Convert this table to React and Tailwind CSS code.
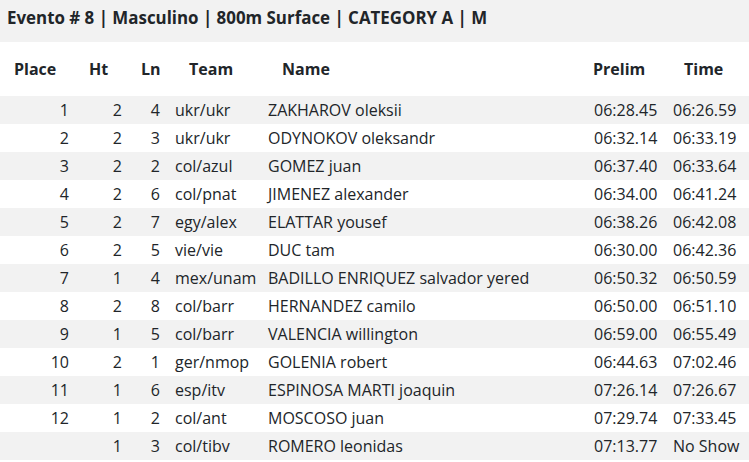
import React from "react";

const rows = [
  ["1", "2", "4", "ukr/ukr", "ZAKHAROV oleksii", "06:28.45", "06:26.59"],
  ["2", "2", "3", "ukr/ukr", "ODYNOKOV oleksandr", "06:32.14", "06:33.19"],
  ["3", "2", "2", "col/azul", "GOMEZ juan", "06:37.40", "06:33.64"],
  ["4", "2", "6", "col/pnat", "JIMENEZ alexander", "06:34.00", "06:41.24"],
  ["5", "2", "7", "egy/alex", "ELATTAR yousef", "06:38.26", "06:42.08"],
  ["6", "2", "5", "vie/vie", "DUC tam", "06:30.00", "06:42.36"],
  ["7", "1", "4", "mex/unam", "BADILLO ENRIQUEZ salvador yered", "06:50.32", "06:50.59"],
  ["8", "2", "8", "col/barr", "HERNANDEZ camilo", "06:50.00", "06:51.10"],
  ["9", "1", "5", "col/barr", "VALENCIA willington", "06:59.00", "06:55.49"],
  ["10", "2", "1", "ger/nmop", "GOLENIA robert", "06:44.63", "07:02.46"],
  ["11", "1", "6", "esp/itv", "ESPINOSA MARTI joaquin", "07:26.14", "07:26.67"],
  ["12", "1", "2", "col/ant", "MOSCOSO juan", "07:29.74", "07:33.45"],
  ["", "1", "3", "col/tibv", "ROMERO leonidas", "07:13.77", "No Show"],
];

const grid = "grid grid-cols-[80px_50px_37px_93px_326px_79px_84px]";

export default function App() {
  return (
    <div
      className="w-[749px] h-[462px] bg-white text-[#212529] overflow-hidden"
      style={{ fontFamily: '"Open Sans", "Noto Sans", sans-serif' }}
    >
      <div className="h-[42px] bg-[#f2f2f2] pl-[7px] pt-[6px] text-[16.9px] leading-[24px] font-bold whitespace-nowrap">
        Evento # 8 | Masculino | 800m Surface | CATEGORY A | M
      </div>
      <div className={`${grid} h-[54px] items-center font-bold text-[16px] whitespace-nowrap`}>
        <div className="pl-[14px]">Place</div>
        <div className="pl-[9px]">Ht</div>
        <div className="pl-[11px]">Ln</div>
        <div className="pl-[22px]">Team</div>
        <div className="pl-[22px]">Name</div>
        <div className="pl-[7px]">Prelim</div>
        <div className="pl-[19px]">Time</div>
      </div>
      {rows.map((r, i) => (
        <div
          key={i}
          className={`${grid} h-[28px] items-center text-[16px] whitespace-nowrap ${
            i % 2 === 0 ? "bg-[#f2f2f2]" : "bg-white"
          }`}
        >
          <div className="text-right pr-[11px]">{r[0]}</div>
          <div className="text-right pr-[8px]">{r[1]}</div>
          <div className="text-right pr-[7px]">{r[2]}</div>
          <div className="pl-[8px]">{r[3]}</div>
          <div className="pl-[8px]">{r[4]}</div>
          <div className="pl-[8px]">{r[5]}</div>
          <div className="pl-[8px]">{r[6]}</div>
        </div>
      ))}
    </div>
  );
}
